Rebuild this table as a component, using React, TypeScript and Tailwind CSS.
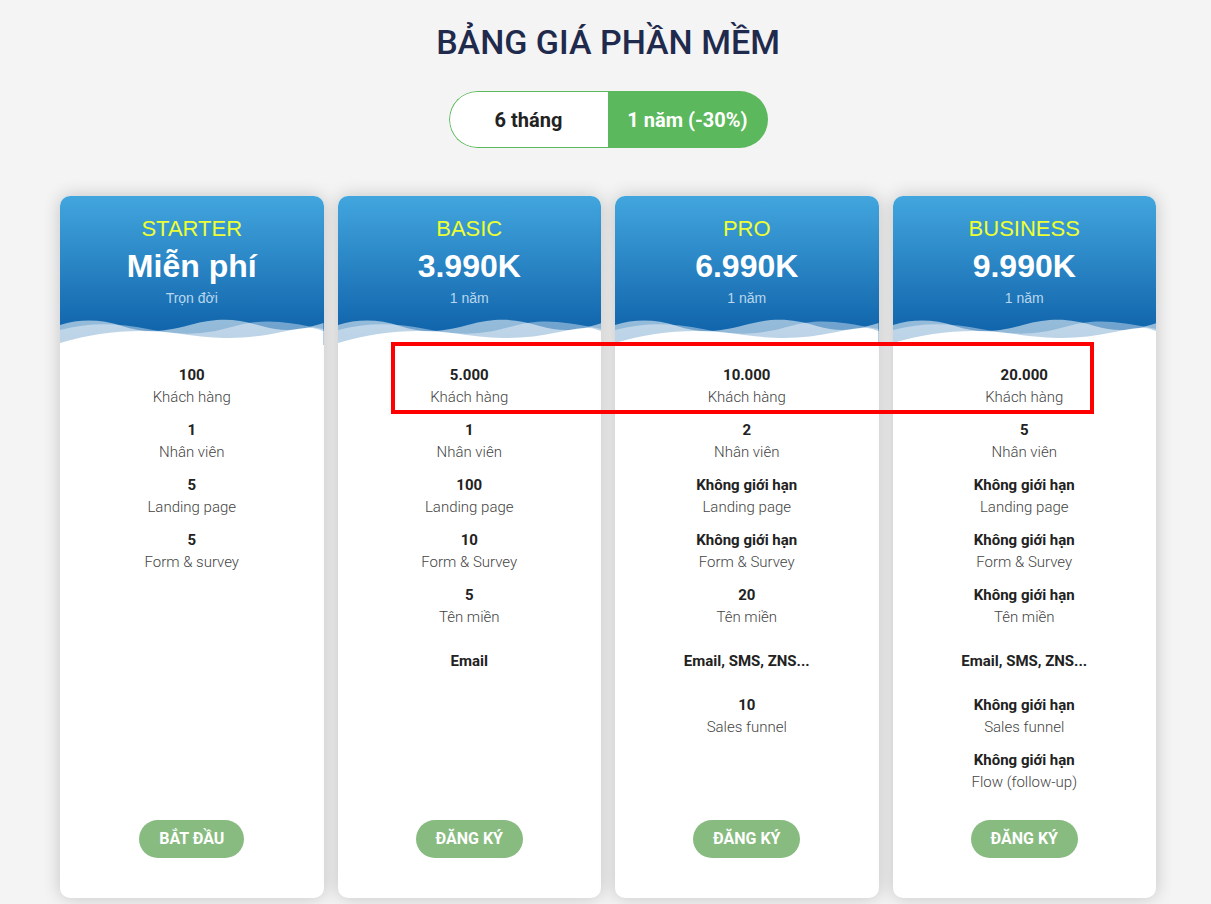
import React from 'react';

type Item = { value: string; label?: string };
type Plan = { name: string; price: string; period: string; button: string; items: Item[] };

const plans: Plan[] = [
    {
        name: 'STARTER',
        price: 'Miễn phí',
        period: 'Trọn đời',
        button: 'BẮT ĐẦU',
        items: [
            { value: '100', label: 'Khách hàng' },
            { value: '1', label: 'Nhân viên' },
            { value: '5', label: 'Landing page' },
            { value: '5', label: 'Form & survey' },
        ],
    },
    {
        name: 'BASIC',
        price: '3.990K',
        period: '1 năm',
        button: 'ĐĂNG KÝ',
        items: [
            { value: '5.000', label: 'Khách hàng' },
            { value: '1', label: 'Nhân viên' },
            { value: '100', label: 'Landing page' },
            { value: '10', label: 'Form & Survey' },
            { value: '5', label: 'Tên miền' },
            { value: 'Email' },
        ],
    },
    {
        name: 'PRO',
        price: '6.990K',
        period: '1 năm',
        button: 'ĐĂNG KÝ',
        items: [
            { value: '10.000', label: 'Khách hàng' },
            { value: '2', label: 'Nhân viên' },
            { value: 'Không giới hạn', label: 'Landing page' },
            { value: 'Không giới hạn', label: 'Form & Survey' },
            { value: '20', label: 'Tên miền' },
            { value: 'Email, SMS, ZNS...' },
            { value: '10', label: 'Sales funnel' },
        ],
    },
    {
        name: 'BUSINESS',
        price: '9.990K',
        period: '1 năm',
        button: 'ĐĂNG KÝ',
        items: [
            { value: '20.000', label: 'Khách hàng' },
            { value: '5', label: 'Nhân viên' },
            { value: 'Không giới hạn', label: 'Landing page' },
            { value: 'Không giới hạn', label: 'Form & Survey' },
            { value: 'Không giới hạn', label: 'Tên miền' },
            { value: 'Email, SMS, ZNS...' },
            { value: 'Không giới hạn', label: 'Sales funnel' },
            { value: 'Không giới hạn', label: 'Flow (follow-up)' },
        ],
    },
];

const Wave: React.FC = () => (
    <svg viewBox="0 0 264 26" preserveAspectRatio="none" className="block w-full h-[26px]">
        <path d="M0,6 C20,0 40,0 62,7 S100,14 130,6 S178,0 202,7 S242,11 264,4 V26 H0 Z" fill="rgba(255,255,255,0.55)" />
        <path d="M0,11 C30,3 58,4 88,10 S140,17 172,8 S222,2 264,10 V26 H0 Z" fill="rgba(255,255,255,0.4)" />
        <path d="M0,24 C40,12 80,9 122,15 S188,20 222,13 S255,10 264,12 V26 H0 Z" fill="#ffffff" />
    </svg>
);

const PlanCard: React.FC<{ plan: Plan }> = ({ plan }) => (
    <div className="h-[702px] flex flex-col bg-white rounded-[10px] overflow-hidden shadow-[0_0_18px_rgba(0,0,0,0.2)]">
        <div className="bg-gradient-to-b from-[#42a6de] to-[#0a5ea6] pt-[18px] text-center font-['Liberation_Sans',Arial,sans-serif]">
            <div className="text-[22px] leading-[30px] text-[#eeff33]">{plan.name}</div>
            <div className="mt-[1px] text-[32px] leading-[42px] font-bold text-white">{plan.price}</div>
            <div className="text-[14px] leading-[22px] text-[#b9d7ee]">{plan.period}</div>
            <div className="h-[10px]" />
            <Wave />
        </div>
        <div className="flex-1 flex flex-col items-center pt-[19px] font-['Roboto',sans-serif] text-[15px] leading-[22px]">
            <div className="flex flex-col gap-[11px] w-full">
                {plan.items.map((it, i) => (
                    <div key={i} className="h-[44px] flex flex-col items-center justify-center text-center">
                        <div className="font-bold text-[#222]">{it.value}</div>
                        {it.label && <div className="font-light text-[#444]">{it.label}</div>}
                    </div>
                ))}
            </div>
            <button className="mt-auto mb-[40px] h-[38px] px-[20px] rounded-full bg-[#87bb80] text-white font-bold text-[16px]">
                {plan.button}
            </button>
        </div>
    </div>
);

export default function App() {
    return (
        <div className="min-h-screen bg-[#f4f4f4] overflow-hidden">
            <div className="w-[1096px] ml-[60px] pt-[22px] pb-[20px]">
                <h1 className="text-center text-[34px] leading-[40px] font-medium text-[#1f2a4d] font-['Roboto',sans-serif]">
                    BẢNG GIÁ PHẦN MỀM
                </h1>
                <div className="flex justify-center mt-[29px]">
                    <div className="flex h-[57px] rounded-full overflow-hidden font-['Roboto',sans-serif] text-[20px] font-bold">
                        <div className="w-[159px] flex items-center justify-center bg-white text-[#222] border border-[#5cb85c] border-r-0 rounded-l-full">
                            6 tháng
                        </div>
                        <div className="w-[160px] flex items-center justify-center bg-[#5cb85c] text-white">
                            1 năm (-30%)
                        </div>
                    </div>
                </div>
                <div className="relative mt-[48px] grid grid-cols-4 gap-[14px]">
                    {plans.map((p) => (
                        <PlanCard key={p.name} plan={p} />
                    ))}
                    <div className="absolute left-[331px] top-[146px] w-[703px] h-[72px] border-4 border-[#ff0000] pointer-events-none" />
                </div>
            </div>
        </div>
    );
}
